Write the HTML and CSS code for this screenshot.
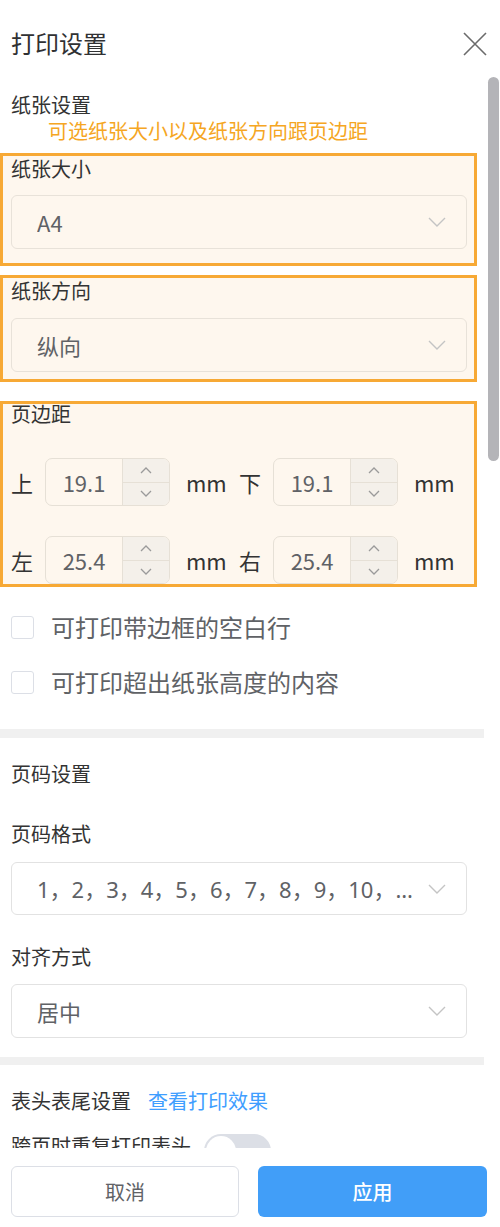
FILE: index.html
```html
<!DOCTYPE html>
<html lang="zh-CN">
<head>
<meta charset="utf-8">
<title>打印设置</title>
<link rel="stylesheet" href="styles.css">
</head>
<body>
<div class="dialog">
  <header class="hd">
    <h1 class="title">打印设置</h1>
    <svg class="close" width="24" height="24" viewBox="0 0 24 24"><path d="M1 1 L23 23 M23 1 L1 23" stroke="#6b6b6b" stroke-width="1.6" fill="none"/></svg>
  </header>

  <div class="scroll">
    <div class="content">
      <div class="sec-title">纸张设置</div>
      <div class="note">可选纸张大小以及纸张方向跟页边距</div>

      <div class="hl hl-size">
        <div class="label">纸张大小</div>
        <div class="select sel-a">
          <span class="sel-text">A4</span>
          <svg class="chev" width="18" height="10" viewBox="0 0 18 10"><polyline points="1,1 9,9 17,1" fill="none" stroke="#c4c4c4" stroke-width="1.4"/></svg>
        </div>
      </div>

      <div class="hl hl-dir">
        <div class="label">纸张方向</div>
        <div class="select sel-b">
          <span class="sel-text">纵向</span>
          <svg class="chev" width="18" height="10" viewBox="0 0 18 10"><polyline points="1,1 9,9 17,1" fill="none" stroke="#c4c4c4" stroke-width="1.4"/></svg>
        </div>
      </div>

      <div class="hl hl-margin">
        <div class="label label-tight">页边距</div>
        <div class="mrow mrow-1">
          <span class="mlabel">上</span>
          <div class="num">
            <span class="num-val">19.1</span>
            <div class="num-spin">
              <span class="spin-btn"><svg width="12" height="7" viewBox="0 0 12 7"><polyline points="1,6 6,1 11,6" fill="none" stroke="#9a9a9a" stroke-width="1.3"/></svg></span>
              <span class="spin-btn spin-down"><svg width="12" height="7" viewBox="0 0 12 7"><polyline points="1,1 6,6 11,1" fill="none" stroke="#9a9a9a" stroke-width="1.3"/></svg></span>
            </div>
          </div>
          <span class="unit">mm</span>
          <span class="mlabel">下</span>
          <div class="num">
            <span class="num-val">19.1</span>
            <div class="num-spin">
              <span class="spin-btn"><svg width="12" height="7" viewBox="0 0 12 7"><polyline points="1,6 6,1 11,6" fill="none" stroke="#9a9a9a" stroke-width="1.3"/></svg></span>
              <span class="spin-btn spin-down"><svg width="12" height="7" viewBox="0 0 12 7"><polyline points="1,1 6,6 11,1" fill="none" stroke="#9a9a9a" stroke-width="1.3"/></svg></span>
            </div>
          </div>
          <span class="unit">mm</span>
        </div>
        <div class="mrow mrow-2">
          <span class="mlabel">左</span>
          <div class="num">
            <span class="num-val">25.4</span>
            <div class="num-spin">
              <span class="spin-btn"><svg width="12" height="7" viewBox="0 0 12 7"><polyline points="1,6 6,1 11,6" fill="none" stroke="#9a9a9a" stroke-width="1.3"/></svg></span>
              <span class="spin-btn spin-down"><svg width="12" height="7" viewBox="0 0 12 7"><polyline points="1,1 6,6 11,1" fill="none" stroke="#9a9a9a" stroke-width="1.3"/></svg></span>
            </div>
          </div>
          <span class="unit">mm</span>
          <span class="mlabel">右</span>
          <div class="num">
            <span class="num-val">25.4</span>
            <div class="num-spin">
              <span class="spin-btn"><svg width="12" height="7" viewBox="0 0 12 7"><polyline points="1,6 6,1 11,6" fill="none" stroke="#9a9a9a" stroke-width="1.3"/></svg></span>
              <span class="spin-btn spin-down"><svg width="12" height="7" viewBox="0 0 12 7"><polyline points="1,1 6,6 11,1" fill="none" stroke="#9a9a9a" stroke-width="1.3"/></svg></span>
            </div>
          </div>
          <span class="unit">mm</span>
        </div>
      </div>

      <div class="check check-1"><span class="cbox"></span><span class="ctext">可打印带边框的空白行</span></div>
      <div class="check check-2"><span class="cbox"></span><span class="ctext">可打印超出纸张高度的内容</span></div>

      <div class="divider div-1"></div>

      <div class="sec-title sec-page">页码设置</div>
      <div class="label label-fmt">页码格式</div>
      <div class="select sel-c">
        <span class="sel-text sel-latin">1，2，3，4，5，6，7，8，9，10，11，12，13</span>
        <svg class="chev" width="18" height="10" viewBox="0 0 18 10"><polyline points="1,1 9,9 17,1" fill="none" stroke="#c4c4c4" stroke-width="1.4"/></svg>
      </div>
      <div class="label label-align">对齐方式</div>
      <div class="select sel-d">
        <span class="sel-text">居中</span>
        <svg class="chev" width="18" height="10" viewBox="0 0 18 10"><polyline points="1,1 9,9 17,1" fill="none" stroke="#c4c4c4" stroke-width="1.4"/></svg>
      </div>

      <div class="divider div-2"></div>

      <div class="sec-title sec-head">表头表尾设置<a class="link">查看打印效果</a></div>
      <div class="toggle-row">
        <span class="toggle-label">跨页时重复打印表头</span>
        <span class="switch"><span class="knob"></span></span>
      </div>
    </div>
    <div class="thumb"></div>
  </div>

  <footer class="ft">
    <button class="btn btn-cancel">取消</button>
    <button class="btn btn-apply">应用</button>
  </footer>
</div>
</body>
</html>
```

FILE: styles.css
```css
* { box-sizing: border-box; }

html, body {
  margin: 0;
  padding: 0;
  background: #ffffff;
}

body {
  font-family: "Noto Sans CJK SC", "Noto Sans", sans-serif;
  color: #333333;
}

.dialog {
  width: 500px;
  height: 1227px;
  display: flex;
  flex-direction: column;
  background: #ffffff;
}

/* header */
.hd {
  height: 76px;
  flex: none;
  display: flex;
  justify-content: space-between;
  align-items: flex-start;
  padding: 27px 13px 0 11px;
}

.title {
  margin: 0;
  font-size: 24px;
  line-height: 32px;
  font-weight: 400;
  color: #303133;
}

.close {
  margin-top: 5px;
  display: block;
}

/* scroll area */
.scroll {
  position: relative;
  height: 1072px;
  flex: none;
  overflow: hidden;
}

.content {
  width: 484px;
  padding: 16px 0 0 11px;
}

.thumb {
  position: absolute;
  top: 1px;
  right: 1px;
  width: 11px;
  height: 384px;
  border-radius: 6px;
  background: #b4b4b8;
}

.sec-title {
  font-size: 20px;
  line-height: 26px;
  color: #333333;
}

.note {
  font-size: 20px;
  line-height: 26px;
  color: #f5a623;
  padding-left: 37px;
}

.label {
  font-size: 20px;
  line-height: 26px;
  color: #333333;
}

.label-tight {
  line-height: 19px;
}

/* highlighted annotation boxes */
.hl {
  margin-left: -11px;
  width: 477px;
  border: 3px solid #f7a935;
  background: #fef7ee;
  padding: 0 7px 0 8px;
}

.hl-size {
  margin-top: 9px;
  padding-bottom: 14px;
}

.hl-size .select { margin-top: 13px; }

.hl-dir {
  margin-top: 9px;
  padding-bottom: 7px;
}

.hl-dir .select { margin-top: 14px; }

.hl-margin {
  margin-top: 19px;
  padding-bottom: 0;
}

/* selects */
.select {
  width: 456px;
  height: 54px;
  border: 1px solid #e2e2e2;
  border-radius: 6px;
  display: flex;
  align-items: center;
  padding: 0 20px 0 25px;
  background: #ffffff;
}

.hl .select {
  background: transparent;
  border-color: #e8e2d9;
}

.sel-text {
  flex: 1;
  min-width: 0;
  font-size: 22px;
  line-height: 30px;
  color: #606266;
  white-space: nowrap;
  overflow: hidden;
  text-overflow: ellipsis;
  margin-right: 12px;
}

.sel-latin {
  font-family: "Noto Sans", "Noto Sans CJK SC", sans-serif;
}

.chev {
  flex: none;
  display: block;
}

/* margin rows */
.mrow {
  display: flex;
  align-items: center;
  height: 48px;
}

.mrow-1 { margin-top: 35px; }
.mrow-2 { margin-top: 30px; }

.mlabel {
  width: 34px;
  font-size: 22px;
  color: #333333;
  line-height: 30px;
}

.unit {
  margin-left: 16px;
  width: 53px;
  font-size: 22px;
  color: #333333;
  line-height: 30px;
}

.num {
  width: 125px;
  height: 48px;
  border: 1px solid #e6e0d6;
  border-radius: 7px;
  display: flex;
  overflow: hidden;
}

.num-val {
  flex: 1;
  display: flex;
  align-items: center;
  justify-content: center;
  font-size: 22px;
  color: #606266;
}

.num-spin {
  width: 47px;
  display: flex;
  flex-direction: column;
  border-left: 1px solid #e6e0d6;
  background: #f4f0ea;
}

.spin-btn {
  flex: 1;
  display: flex;
  align-items: center;
  justify-content: center;
}

.spin-btn svg { display: block; }

.spin-down {
  border-top: 1px solid #e6e0d6;
}

/* checkboxes */
.check {
  display: flex;
  align-items: center;
  height: 40px;
}

.check-1 { margin-top: 20px; }
.check-2 { margin-top: 15px; }

.cbox {
  width: 23px;
  height: 23px;
  border: 1px solid #dcdfe6;
  border-radius: 3px;
  background: #ffffff;
  flex: none;
}

.ctext {
  margin-left: 17px;
  font-size: 24px;
  line-height: 32px;
  color: #606266;
}

/* dividers */
.divider {
  margin-left: -11px;
  width: 484px;
  background: #f0f0f0;
}

.div-1 { margin-top: 27px; height: 9px; }
.div-2 { margin-top: 19px; height: 8px; }

.sec-page { margin-top: 23px; }
.label-fmt { margin-top: 34px; }
.sel-c { margin-top: 15px; height: 53px; }
.label-align { margin-top: 29px; }
.sel-d { margin-top: 14px; }

.sec-head { margin-top: 23px; }

.link {
  margin-left: 17px;
  color: #409eff;
}

.toggle-row {
  display: flex;
  align-items: flex-start;
  margin-top: 19px;
}

.toggle-label {
  font-size: 20px;
  line-height: 26px;
  color: #333333;
}

.switch {
  margin-left: 13px;
  margin-top: 1px;
  width: 67px;
  height: 34px;
  border-radius: 17px;
  background: #dcdfe6;
  padding: 2px;
  display: flex;
}

.knob {
  width: 30px;
  height: 30px;
  border-radius: 50%;
  background: #ffffff;
}

/* footer */
.ft {
  flex: none;
  display: flex;
  gap: 19px;
  padding: 18px 13px 0 11px;
}

.btn {
  height: 51px;
  padding: 0;
  border-radius: 6px;
  font-family: "Noto Sans CJK SC", "Noto Sans", sans-serif;
  font-size: 20px;
  line-height: 28px;
  cursor: pointer;
}

.btn-cancel {
  width: 228px;
  background: #ffffff;
  border: 1px solid #dcdfe6;
  color: #606266;
}

.btn-apply {
  width: 229px;
  background: #419ef8;
  border: none;
  color: #ffffff;
  font-weight: 500;
}
```
